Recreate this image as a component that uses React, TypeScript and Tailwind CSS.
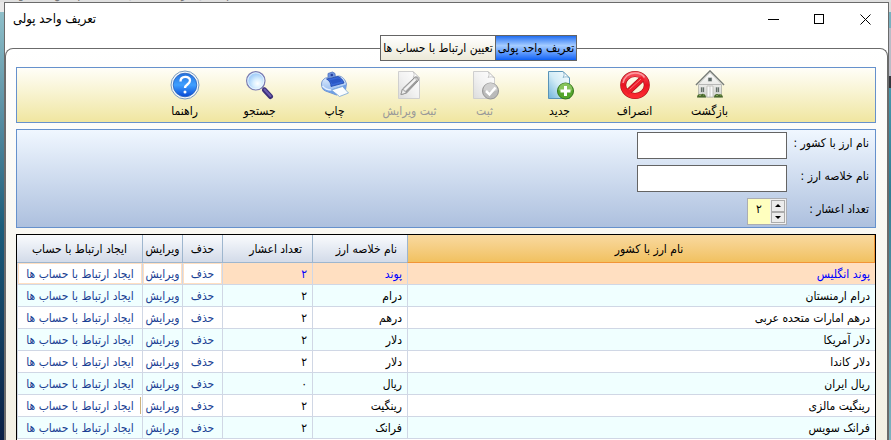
import { ReactNode } from "react";

const rows: [string, string, string][] = [
  ["پوند انگلیس", "پوند", "۲"],
  ["درام ارمنستان", "درام", "۲"],
  ["درهم امارات متحده عربی", "درهم", "۲"],
  ["دلار آمریکا", "دلار", "۲"],
  ["دلار کاندا", "دلار", "۲"],
  ["ریال ایران", "ریال", "۰"],
  ["رینگیت مالزی", "رینگیت", "۲"],
  ["فرانک سویس", "فرانک", "۲"],
];

const activeRow = 6;

function HouseIcon() {
  return (
    <svg viewBox="0 0 30 30" className="size-[30px]" aria-hidden="true">
      <defs>
        <linearGradient id="house-wall" x1="0" y1="0" x2="0" y2="1">
          <stop offset="0" stopColor="#fff" />
          <stop offset="1" stopColor="#d4d5cf" />
        </linearGradient>
      </defs>
      <path d="M3.5 14 15 2.5 26.5 14V27h-23z" fill="url(#house-wall)" stroke="#9b9d98" strokeWidth=".6" />
      <path d="M1 15 15 1 29 15" fill="none" stroke="#777c78" strokeWidth="1.600" />
      <path d="M2.500 14.800 15 2.500l12.500 12.300" fill="none" stroke="#e4e6e2" strokeWidth=".8" />
      <path d="M13 7.500h4v4h-4z" fill="#5b6763" stroke="#ddd" strokeWidth=".6" />
      <path d="M4 14.500h22" stroke="#aaa" strokeWidth=".8" />
      <path d="M5.500 17h4v5.500h-4zM20.500 17h4v5.500h-4z" fill="#66706b" stroke="#eee" strokeWidth=".6" />
      <path d="M7.500 17v5M22.500 17v5" stroke="#c9d0c9" strokeWidth=".6" />
      <path d="M12 16h6v11h-6z" fill="#f8f8f8" stroke="#b1b1ac" strokeWidth=".7" />
      <path d="M15 16v11" stroke="#b1b1ac" strokeWidth=".6" />
      <path d="M2 27.500c0-3 2-4 4-3 2-2 5 0 5 3zM19 27.500c0-3 2.500-4.500 5-3 2-1 4 .5 4 3z" fill="#48692d" />
      <path d="M4 25.500h2M8 25h1M21 25.500h2M25 25h1.500" stroke="#86a55a" />
    </svg>
  );
}

function CancelIcon() {
  return (
    <svg viewBox="0 0 30 30" className="size-[30px]" aria-hidden="true">
      <defs>
        <linearGradient id="cancel-red" x1="0" y1="0" x2="0" y2="1">
          <stop offset="0" stopColor="#f8505c" />
          <stop offset=".5" stopColor="#e81220" />
          <stop offset="1" stopColor="#fb2b30" />
        </linearGradient>
      </defs>
      <ellipse cx="15" cy="15" rx="11.800" ry="11" fill="none" stroke="#a50d16" strokeWidth="6" />
      <path d="M7 23 23 8" stroke="#a50d16" strokeWidth="6" />
      <ellipse cx="15" cy="15" rx="11.800" ry="11" fill="none" stroke="url(#cancel-red)" strokeWidth="4.800" />
      <path d="M7 23 23 8" stroke="#ee1c29" strokeWidth="4.800" />
      <path d="M3 13C4 7 9 3 15 3c5 0 8 2 9.500 4.500" fill="none" stroke="#ffb0b3" strokeWidth="1.500" opacity=".8" />
      <path d="M9.500 19.500 21 9" stroke="#ff9297" strokeWidth="1" opacity=".7" />
    </svg>
  );
}

function SheetIcon({ muted, children }: { muted?: boolean; children: ReactNode }) {
  const id = muted ? "sheet-muted" : "sheet-blue";
  return (
    <svg viewBox="0 0 30 30" className="size-[30px]" aria-hidden="true">
      <defs>
        <linearGradient id={id} x1="1" y1="0" x2="0" y2="1">
          <stop offset="0" stopColor={muted ? "#ffffff" : "#f8fdff"} />
          <stop offset=".5" stopColor={muted ? "#f2f2f2" : "#d3ecf6"} />
          <stop offset="1" stopColor={muted ? "#dcdcdc" : "#70b4dc"} />
        </linearGradient>
      </defs>
      <path d="M3.500 1.500H18L24.500 8v20.500h-21z" fill={`url(#${id})`} stroke={muted ? "#cfcfcf" : "#5993b8"} />
      <path d="M18 1.500c1.500 2 1.500 4 0 6 2-1 5-1 6.500 .5z" fill="#fff" stroke={muted ? "#bdbdbd" : "#79a9c4"} strokeWidth=".8" />
      {children}
    </svg>
  );
}

function NewIcon() {
  return (
    <SheetIcon>
      <circle cx="20.500" cy="21" r="8" fill="#54a52c" stroke="#34751b" />
      <path d="M13.500 20a7 7 0 0 1 14 0c-4 2-9 2-14 0z" fill="#9bd06f" opacity=".7" />
      <path d="M20.500 16v10M15.500 21h10" stroke="#fff" strokeWidth="3" />
    </SheetIcon>
  );
}

function SaveIcon() {
  return (
    <SheetIcon muted>
      <circle cx="20.500" cy="21" r="8" fill="#bababa" stroke="#969696" />
      <path d="M13.500 20a7 7 0 0 1 14 0c-4 2-9 2-14 0z" fill="#dcdcdc" opacity=".7" />
      <path d="m16 21 3.500 3.500 6-7" fill="none" stroke="#fff" strokeWidth="2.500" />
    </SheetIcon>
  );
}

function SaveEditIcon() {
  return (
    <SheetIcon muted>
      <path d="m7.500 19 12-11.500c2-1.500 5 1 3.500 3.500L11.500 23l-5.500 1.500z" fill="#c9c9c9" stroke="#8a8a8a" />
      <path d="m9.500 20 11-10.500" stroke="#f4f4f4" strokeWidth="2" />
      <path d="m11 22 11-11.500" stroke="#979797" strokeWidth="1.200" />
      <path d="m7.500 19 4 4-5.500 1.500z" fill="#eee" stroke="#8d8d8d" strokeWidth=".7" />
    </SheetIcon>
  );
}

function PrinterIcon() {
  return (
    <svg viewBox="0 0 30 30" className="size-[30px]" aria-hidden="true">
      <defs>
        <linearGradient id="printer-body" x1="0" y1="0" x2="0" y2="1">
          <stop offset="0" stopColor="#e4f0ff" />
          <stop offset="1" stopColor="#83aeea" />
        </linearGradient>
      </defs>
      <path d="M8 9V3.500l4.500-1.500 2.500 1.500.5 5z" fill="#6f95df" stroke="#4a6ec0" strokeWidth=".8" />
      <circle cx="11.800" cy="5" r="1.300" fill="#263f9c" />
      <path d="M1.500 14c0-3 2-5 4-6l13-2c4 0 7 4 8 8l-1 6-9 5-11-4c-3-1-4-4-4-7z" fill="url(#printer-body)" stroke="#6287c8" strokeWidth=".8" />
      <path d="M6.500 9 18 6.500c3 1 5 3.500 6 6.500L11 16.500c0-3-1.500-6-4.500-7.500z" fill="#3869d8" stroke="#1b43a8" strokeWidth=".8" />
      <path d="M9.500 10.500 18 8.500c2 0 3 1.500 3.500 3l-9 2.500z" fill="#2a57c6" />
      <path d="M2 15.500c1 2 5 4 9 4l15-5v5l-9 5.500-11-4c-2-1-4-3-4-5.500z" fill="#6f9fe6" />
      <path d="M2.500 16c2 2.500 5 4 9 4" fill="none" stroke="#e3efff" strokeWidth="1.500" />
      <path d="m11.500 20 11-3.500 6 6.500-9 3.500z" fill="#fafdff" stroke="#77a4d6" strokeWidth=".8" />
    </svg>
  );
}

function SearchIcon() {
  return (
    <svg viewBox="0 0 30 30" className="size-[30px]" aria-hidden="true">
      <defs>
        <radialGradient id="lens" cx=".6" cy=".65">
          <stop offset="0" stopColor="#fff" />
          <stop offset=".5" stopColor="#d8efff" />
          <stop offset="1" stopColor="#a8d1fa" />
        </radialGradient>
      </defs>
      <path d="m17 17 3 3" stroke="#9b9bb0" strokeWidth="3" />
      <path d="m19.500 20 6 6.500" stroke="#3b2f78" strokeWidth="5" strokeLinecap="round" />
      <path d="m19.500 19.500 6 6.500" stroke="#6b5cb0" strokeWidth="2" strokeLinecap="round" />
      <circle cx="10.800" cy="10.800" r="9.200" fill="url(#lens)" stroke="#7b7bb0" strokeWidth="1.200" />
      <circle cx="10.800" cy="10.800" r="8" fill="none" stroke="#edf6ff" strokeWidth=".8" />
    </svg>
  );
}

function HelpIcon() {
  return (
    <svg viewBox="0 0 30 30" className="size-[30px]" aria-hidden="true">
      <defs>
        <linearGradient id="help-blue" x1="0" y1="0" x2="0" y2="1">
          <stop offset="0" stopColor="#2470dd" />
          <stop offset=".5" stopColor="#3fa0ff" />
          <stop offset="1" stopColor="#0647d4" />
        </linearGradient>
      </defs>
      <circle cx="15" cy="15" r="14" fill="#f3f7fb" stroke="#7a9abd" />
      <circle cx="15" cy="15" r="11.800" fill="url(#help-blue)" stroke="#2862ba" strokeWidth=".8" />
      <path d="M10.500 11.500c0-6 9.500-6 9.500-1 0 4-5 4-5 7.500" fill="none" stroke="#fff" strokeWidth="2.300" />
      <circle cx="15" cy="22" r="1.500" fill="#fff" />
    </svg>
  );
}

const tools: { label: string; icon: ReactNode; disabled?: boolean }[] = [
  { label: "بازگشت", icon: <HouseIcon /> },
  { label: "انصراف", icon: <CancelIcon /> },
  { label: "جدید", icon: <NewIcon /> },
  { label: "ثبت", icon: <SaveIcon />, disabled: true },
  { label: "ثبت ویرایش", icon: <SaveEditIcon />, disabled: true },
  { label: "چاپ", icon: <PrinterIcon /> },
  { label: "جستجو", icon: <SearchIcon /> },
  { label: "راهنما", icon: <HelpIcon /> },
];

function TitleBar() {
  return (
    <header dir="ltr" className="flex h-8 items-center justify-between">
      <h1 className="pl-2 text-[13px]">تعریف واحد پولی</h1>
      <div className="flex">
        <button aria-label="Minimize" className="flex h-7 w-[46px] items-center justify-center">
          <svg viewBox="0 0 11 11" className="size-[11px]" shapeRendering="crispEdges"><path d="M0 5.500h11" stroke="#000" /></svg>
        </button>
        <button aria-label="Maximize" className="flex h-7 w-[46px] items-center justify-center">
          <svg viewBox="0 0 11 11" className="size-[11px]" shapeRendering="crispEdges"><path d="M.5.5h9v9h-9z" fill="none" stroke="#000" /></svg>
        </button>
        <button aria-label="Close" className="flex h-7 w-[46px] items-center justify-center">
          <svg viewBox="0 0 11 11" className="size-[11px]"><path d="m.5.5 10 10m0-10-10 10" stroke="#000" /></svg>
        </button>
      </div>
    </header>
  );
}

function EntryForm() {
  return (
    <form className="flex flex-col gap-1.5 border border-[#6691cc] bg-linear-to-b from-[#f0f7ff] to-[#adc0de] px-1.5 py-0.5">
      <div className="flex items-start">
        <label htmlFor="currency" className="w-[82px] pt-[3px]">نام ارز با کشور :</label>
        <input id="currency" className="h-[27px] w-[150px] border border-[#646464] bg-white px-1" />
      </div>
      <div className="flex items-start">
        <label htmlFor="short-name" className="w-[82px] pt-[3px]">نام خلاصه ارز :</label>
        <input id="short-name" className="h-[27px] w-[150px] border border-[#646464] bg-white px-1" />
      </div>
      <div className="flex items-start">
        <label htmlFor="decimals" className="w-[82px] pt-[3px]">تعداد اعشار :</label>
        <div className="flex h-[27px] w-10 border border-[#abadb3] bg-[#ffffbf]">
          <div className="flex w-4 shrink-0 flex-col bg-[#f0f0f0] p-px">
            <button type="button" aria-label="Increase" className="flex flex-1 items-center justify-center border border-[#acacac] bg-[#ececec]">
              <svg viewBox="0 0 6 3" className="h-[3px] w-1.5"><path d="M0 3 3 0l3 3z" /></svg>
            </button>
            <button type="button" aria-label="Decrease" className="flex flex-1 items-center justify-center border border-[#acacac] bg-[#ececec]">
              <svg viewBox="0 0 6 3" className="h-[3px] w-1.5"><path d="m0 0 3 3 3-3z" /></svg>
            </button>
          </div>
          <input id="decimals" defaultValue="۲" className="h-5 w-full min-w-0 bg-transparent text-center" />
        </div>
      </div>
    </form>
  );
}

function CurrencyTable() {
  const head = "border-b border-[#9eb6ce] bg-linear-to-b from-[#f9fbfd] to-[#d3dbe9] font-normal";
  return (
    <table className="w-full table-fixed border-separate border-spacing-0">
      <colgroup>
        <col />
        <col className="w-[95px]" />
        <col className="w-[90px]" />
        <col className="w-10" />
        <col className="w-10" />
        <col className="w-[125px]" />
      </colgroup>
      <thead>
        <tr className="h-7 whitespace-nowrap">
          <th className="border-r border-b border-l border-[#f29536] border-l-[#9eb6ce] bg-linear-to-b from-[#f9d99f] to-[#f1c15f] pl-4 font-normal">نام ارز با کشور</th>
          <th className={`${head} border-l pr-2.5 text-right`}>نام خلاصه ارز</th>
          <th className={`${head} border-l pr-2.5 text-right`}>تعداد اعشار</th>
          <th className={`${head} border-l`}>حذف</th>
          <th className={`${head} border-l`}>ویرایش</th>
          <th className={head}>ایجاد ارتباط با حساب</th>
        </tr>
      </thead>
      <tbody>
        {rows.map(([name, short, decimals], i) => {
          const tone = i === 0 ? "bg-[#ffdfc1] text-[#0000ff]" : i % 2 ? "bg-[#f0ffff] text-black" : "bg-white text-black";
          const cell = "border-b border-l border-[#d0d7e5] pr-[5px]";
          const link = `border-b border-l border-[#d0d7e5] text-center text-[#1b3f94] ${i === 0 ? "bg-white shadow-[inset_0_0_0_1px_#ffdfc1]" : ""}`;
          return (
            <tr key={name} className={`h-[22px] whitespace-nowrap ${tone}`}>
              <td className={cell}>{name}</td>
              <td className={cell}>{short}</td>
              <td className={cell}>{decimals}</td>
              <td className={link}><a href="#delete">حذف</a></td>
              <td className={link}><a href="#edit">ویرایش</a></td>
              <td className={`${link} relative`}>
                {i === activeRow && <span className="absolute inset-y-0.5 right-px w-px bg-[#cdb27c]" />}
                <a href="#accounts">ایجاد ارتباط با حساب ها</a>
              </td>
            </tr>
          );
        })}
      </tbody>
    </table>
  );
}

export default function App() {
  return (
    <div
      dir="rtl"
      className="flex h-screen flex-col overflow-hidden bg-[#e0e0e0] font-['DejaVu_Sans_Condensed','DejaVu_Sans',sans-serif] text-[12px] leading-4 text-black"
    >
      <div dir="ltr" className="flex h-0.5 shrink-0 items-end gap-9 overflow-hidden pl-1 text-[#777]">
        <span>English : نام لاتین</span>
        <span>نام امکان : راست همدان</span>
      </div>
      <div className="flex min-h-0 flex-1">
        <div className="flex w-0.5 flex-col">
          <div className="h-2.5 bg-[#dcdcdc]" />
          <div className="h-4 bg-[#7ab0bf]" />
          <div className="h-12 bg-[#b9bcc6]" />
          <div className="h-3 bg-[#33363d]" />
          <div className="flex-1 bg-linear-to-b from-[#4796ab] via-[#2f7c92] via-30% to-[#7fb2bf]" />
        </div>
        <main className="flex min-w-0 flex-1 flex-col border border-b-0 border-[#6b6b6b] bg-white">
          <TitleBar />
          <nav className="z-10 flex justify-center pl-16" role="tablist">
            <button role="tab" aria-selected="true" className="h-[26px] w-[82px] border border-[#646464] bg-linear-to-b from-[#1e6cf0] via-[#a5ccff] via-40% to-[#0a60f5] whitespace-nowrap">تعریف واحد پولی</button>
            <button role="tab" aria-selected="false" className="h-[26px] w-[115px] border border-r-0 border-[#646464] bg-linear-to-b from-white to-[#ece9d8] whitespace-nowrap">تعیین ارتباط با حساب ها</button>
          </nav>
          <section className="-mt-[13px] flex min-h-0 flex-1 flex-col gap-1.5 rounded-t-lg border border-b-0 border-[#6b6b6b] bg-linear-to-b from-white to-[#f3f0e4] pt-[18px] pr-[11px] pl-[10px]">
            <div role="toolbar" className="flex h-14 shrink-0 justify-center border border-[#6691cc] bg-linear-to-b from-[#fffef8] to-[#f0e6a0] pl-0.5">
              {tools.map(({ label, icon, disabled }) => (
                <button key={label} disabled={disabled} className="flex w-[75px] flex-col items-center gap-[3px] pt-0.5 whitespace-nowrap disabled:text-[#999]">
                  {icon}
                  <span>{label}</span>
                </button>
              ))}
            </div>
            <EntryForm />
            <div className="min-h-0 flex-1 border border-b-0 border-black bg-white">
              <CurrencyTable />
            </div>
          </section>
        </main>
        <div className="flex w-1 flex-col">
          <div className="h-2.5 bg-[#e8e8e8]" />
          <div className="flex-1 bg-linear-to-b from-[#8fbfc9] via-[#1b5d7a] via-50% to-[#0a1f45]" />
        </div>
      </div>
    </div>
  );
}
